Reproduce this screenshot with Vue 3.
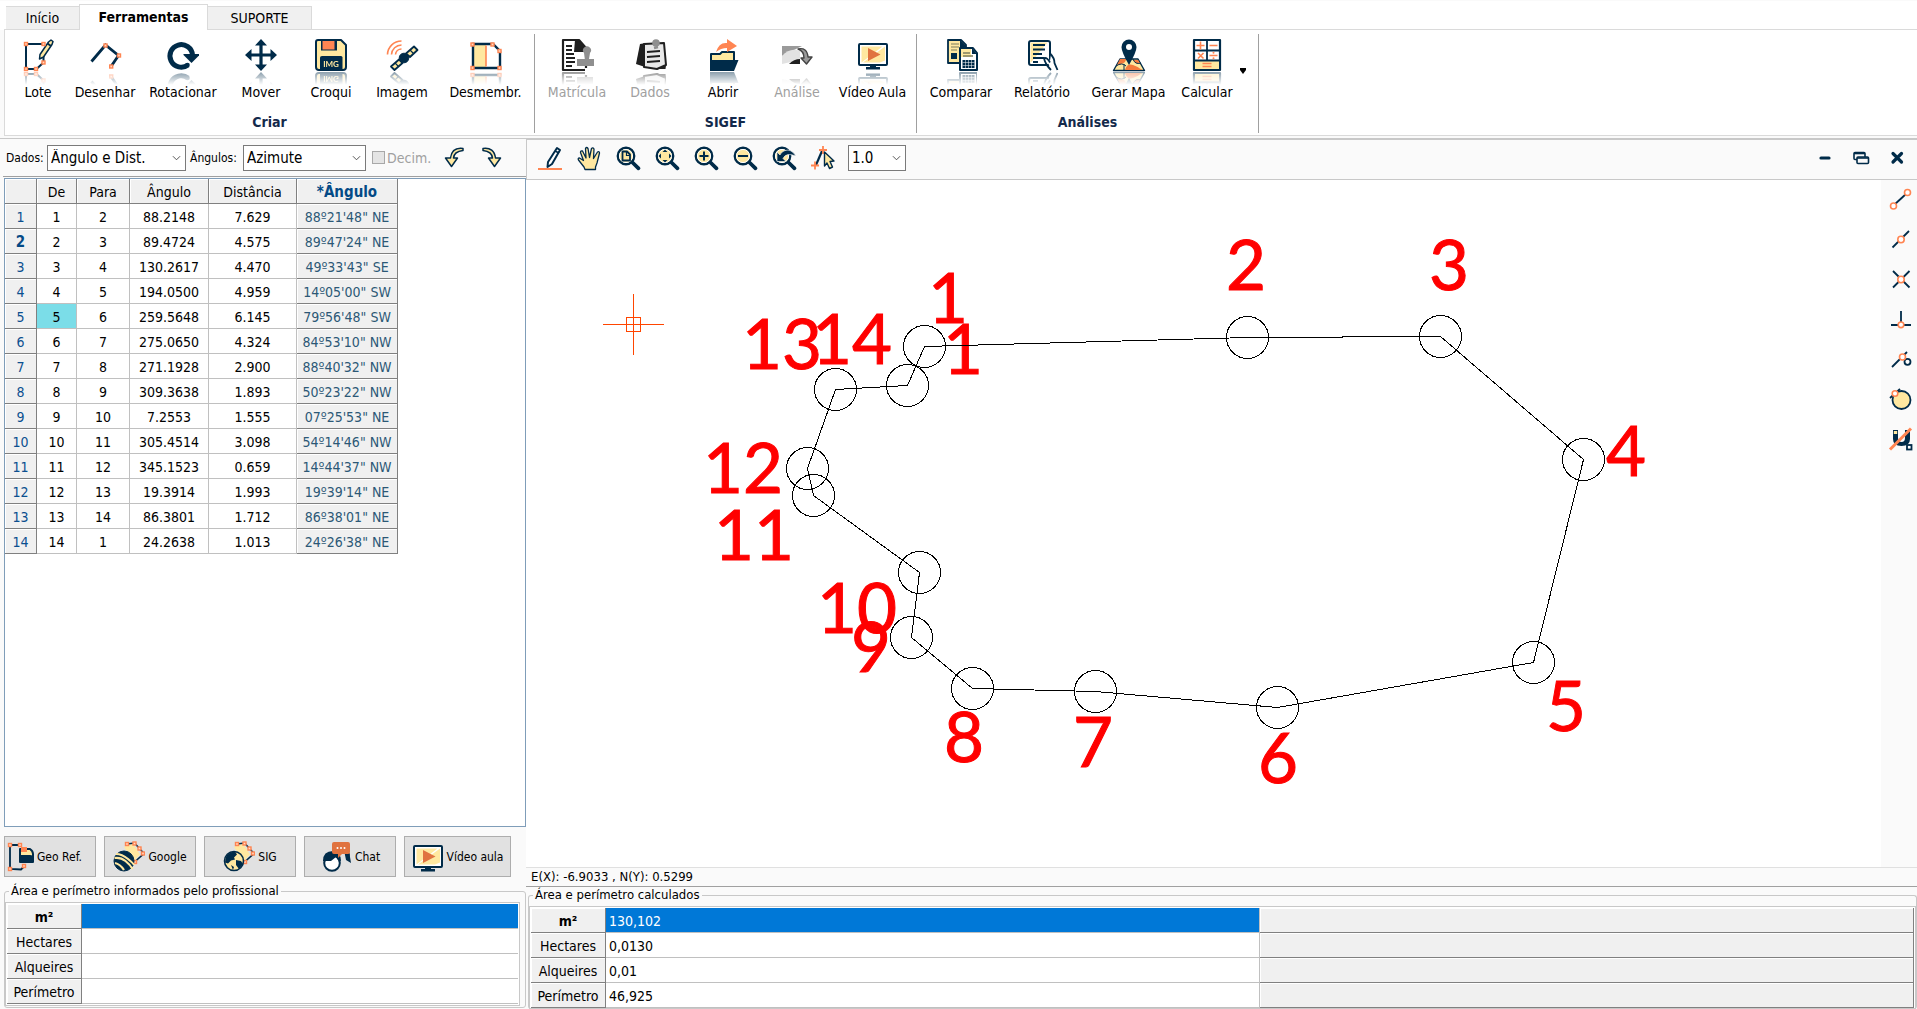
<script setup>
import { ref } from 'vue'

const N = '#002b49'
const O = '#ff8552'
const Y = '#ffe8a0'

const node = (x, y) => `<rect x="${x - 1.5}" y="${y - 1.5}" width="3" height="3" fill="#ffd9c4" stroke="${O}" stroke-width="1.4"/>`
const line = (d, color = N, width = 2) => `<path d="${d}" fill="none" stroke="${color}" stroke-width="${width}"/>`
const shape = (d, fill = N, stroke = 'none', width = 1.5) => `<path d="${d}" fill="${fill}" stroke="${stroke}" stroke-width="${width}" stroke-linejoin="round"/>`
const dot = (x, y, r, fill = '#fff', stroke = O, width = 1.6) => `<circle cx="${x}" cy="${y}" r="${r}" fill="${fill}" stroke="${stroke}" stroke-width="${width}"/>`

const lens = inner => dot(10, 10, 8.2, Y, N, 2.4) + dot(10, 10, 6.6, 'none', '#fff', 1)
  + `<path d="M16.5 16.5l6 5.8" stroke="${N}" stroke-width="3.8" stroke-linecap="round"/>` + inner
const monitor = shape('M3 5h26q1 0 1 1v19q0 1-1 1H3q-1 0-1-1V6q0-1 1-1z', '#fff', N, 2) + shape('M4.5 7.5h21l-21 16z', Y) + shape('M28 7.5v14l-5 2H6z', Y)
  + shape('M11 9l12.500 6.500L11 22z', '#e07340') + shape('M13 26h6v2h4v2.500H9V28h4z')
const parcel = shape('M11 6l9-3.500 7 11-6.500 7z', Y) + line('M14 3l7.500-1L31 12.500 21.500 21', N, 1.6) + node(14, 3) + node(21.5, 2.5) + node(26.5, 7.5) + node(30, 12.5) + node(22, 21)

const icons = {
  lot: line('M22 5H4v25h10.500l7-6.500V17') + shape('M26.500 3l2.500-2 2 1.500-1 3-8.500 12.500-4 2 .5-4.500z', Y, N, 1.5) + line('M25.500 4.500l3.500 2.500') + node(4, 5) + node(21.5, 5) + node(4, 30) + node(14, 30) + node(21.500, 23.5),
  draw: line('M2.500 22.500L16.500 6l13 10.500-7.500 11', N, 2.8) + node(16.5, 6.5) + node(30, 16.5) + node(22.200, 27.5),
  rotate: line('M21 26a11.300 11.300 0 1 1 4.500-10', N, 5) + shape('M16.500 15H32v1.500l-7.500 7.500-8-8z') + dot(20.5, 26, 2.300, N, 'none'),
  move: line('M16 5v22M5 16h22', N, 3.2) + shape('M16 0l6 6.500H10zM16 32l6-6.500H10zM0 16l6.500-6v12zM32 16l-6.500-6v12z'),
  sketch: shape('M3 1h23l5 5v22q0 3-3 3H4q-3 0-3-3V3q0-2 2-2z', Y, N, 2) + shape('M6 1h16v10.500H6z') + shape('M7.500 2h12v8.500h-12z', O) + shape('M7 17h19q1.500 0 1.500 1.500V31H5V18.500Q5 17 7 17z') + `<text x="16" y="28" fill="${Y}" font-size="8" font-weight="700" text-anchor="middle" font-family="Lato, sans-serif">IMG</text>`,
  image: line('M1.500 15.500A14 14 0 0 1 15.500 2M5.500 15.500A10 10 0 0 1 15.500 6M9.500 15.500A6 6 0 0 1 15.500 10', O, 1.6) + shape('M20 14.500l8-7 3.500 3.500-7.500 7zM5 27.500l8-7 3.500 3.500-8 7z', Y, N, 1.8) + dot(18, 19, 4.800, N, N, 1) + line('M24 11l3.500 3.500M9 24l3.500 3.5', N, 1.2),
  split: shape('M3 6h13v22H3z', Y) + line('M3 5h20l7 7v17H3z', N, 2.4) + line('M16 6.500v21', O, 1.6) + node(2.5, 5.5) + node(22.500, 5.5) + node(29.5, 12) + node(29.5, 29) + node(2.500, 29),
  deed: shape('M2 1h16l7 8v22H2z', '#fff', '#1f1f1f', 2.2) + shape('M14 1h4l7 8v4H13z', '#1f1f1f') + line('M5 7h6M5 11h6M5 15h8M5 19h9M5 23h9M5 27h6', '#1f1f1f', 2) + shape('M20 20h4l-1-6a4 4 0 1 1 6 0l-1 6h5v7H16v-7z', '#8f8f8f') + shape('M24 29h6v3h-6z', '#fff'),
  data: shape('M6 5l6-1-1 24-9-3z', '#1f1f1f') + shape('M10 5l20-1 2 22-9 4-13-2z', '#e8e8e8', '#1f1f1f', 2) + shape('M22 30l10-4-.500 4z', '#1f1f1f') + line('M13 13l13-1M13 18l13-1M13 23l13-1', '#1f1f1f', 1.8) + dot(22, 4, 3.800, '#8f8f8f', 'none') + line('M20 9l4-1', '#8f8f8f', 2.5),
  open: shape('M4 15h9l2-2h12v9H4z', Y, N, 2) + shape('M6 21h25.500L27 32H3V21z') + shape('M9 13Q12 3 20 4V0l10 7-10 6V9q-6 0-11 4z', O),
  analysis: shape('M1 7h20L1 17z', '#9a9a9a') + shape('M1 17Q9 8 19 12v9L1 25z', '#e2e2e2') + shape('M8 25q5-5 11-5v5z', '#1f1f1f') + shape('M17 10q9-2 10 8h4l-5.500 7-5.500-6h3q0-7-6-9z', '#9a9a9a', '#444', 1.4),
  monitor,
  compare: shape('M3 1h13l5 5v18H3z', Y, N, 1.8) + shape('M15 1l6 6v3h-6z') + line('M6 5h8M6 8h8M6 11h6', '#7d7c5d', 1.2) + shape('M6 14h6v6H6z') + shape('M15 9h13l4 5v17H15z', '#fff', N, 2) + shape('M16 10h10v8H16z', Y) + shape('M27 9l5 6h-5z') + line('M18 14h7M18 17h10', '#7d7c5d', 1.4) + shape('M17.500 21h12v8h-12z') + line('M17.500 23.500h12M17.500 26.500h12M20.500 21v8M23.500 21v8M26.500 21v8', '#fff', .5),
  report: shape('M5 2h17q2 0 2 2v20q0 2-2 2H5q-2 0-2-2V4q0-2 2-2z', '#fff', N, 2) + shape('M4.500 3.500h17L4.500 24z', Y) + line('M7 6h12M7 10.500h12M7 15h9M7 19h11M7 23h5', N, 1.8) + shape('M24 22q-3-5-5-4l7 14h6l-4-9q0-6-3-8z', '#fff') + line('M25 31q-6-6-7-12 3-1 6 4.500M24.500 15q4 4 4 9l3 7', N, 1.8),
  map: shape('M7 20h18l6.500 11.500H.5z', Y, N, 1.4) + shape('M7 20h6q0 4-5 5l-4 1zM12 31q2-7 8-5t9 5zM20 21h5l2 3q-4 2-7-3z', '#f47a3c') + line('M11 25v7M3 27q6-4 10 0M20 20q2 6 8 4', N, 1) + shape('M16 26Q8.500 13 8.500 8a7.500 7.500 0 0 1 15 0q0 5-7.500 18z') + dot(16, 8, 3, '#fff', 'none'),
  calc: shape('M3 1h26v30H3z', '#fff', N, 2.2) + shape('M4 22h24v8H4z', Y) + line('M16 1v20.500M3 11.500h26M3 21.500h26', N, 1.8) + line('M5.500 6.500h8M9.500 2.500v8M18.500 6.500h8M7 14l5.500 5.500M12.500 14L7 19.500M18.500 16.500h8M11.500 24.500h9M11.500 27.500h9', O, 1.6) + dot(22.500, 13.800, 1, O, 'none') + dot(22.500, 19.300, 1, O, 'none'),

  pencil: shape('M19 2l3 2-8 14-4.500 3 .5-5z', '#fff', N, 2) + line('M17 5l4 2', N, 1.6) + line('M0 23h24', O, 2),
  hand: shape('M7 21L1.500 14q-1-2 1-2l4 2.500-3-8q0-2 2-1.500l3.500 7-.5-9.500q1-2 2.500 0l1.500 9 2-9q1.500-1.500 2.500.500l-.500 9.500 4-6.500q2-1 2 1L20 17l-1.500 4v2.500H8z', Y, N, 1.3),
  zoomPage: lens(shape('M6.500 5.500h4.500l3 3v6H6.500z', Y, N, 1.8) + line('M10.500 6v3.500h3.5', N, 1.2)),
  zoomFit: lens(shape('M10 3.500l2.500 2.500h-5zM10 16.500l2.500-2.500h-5zM3.500 10L6 7.500v5zM16.500 10L14 7.500v5z')),
  zoomIn: lens(line('M5.500 10h9M10 5.500v9', N, 2)),
  zoomOut: lens(line('M5 10h10', N, 2)),
  zoomBack: lens(shape('M5 6v9.500h9l-3-3Q14 6 24 10 19 2.500 13 4.500 9 6 8 9z', N, '#fff', .6)),
  pick: line('M5 19l6-14', N, 2.2) + line('M8 4h8M12 0v8M0 19.500h8M4 15.500v8', O, 1.8) + shape('M13.500 6l9.500 9-4 .5 2.500 5.500-3 1.500-2.500-5.500-2.500 3z', Y, N, 1.4),
  undo: shape('M20 1.500Q9 0 7.500 11H2.500l6 8.500 6-8.500h-4Q11 4.500 20 3.500z', Y, N, 1.5),
  redo: shape('M1 1.500Q12 0 13.500 11h5l-6 8.500-6-8.500h4Q10 4.500 1 3.500z', Y, N, 1.5),

  snapEnd: line('M5 17L17 6', N, 1.8) + dot(4.5, 18, 3) + dot(18.5, 4.5, 3),
  snapMid: line('M3.500 19.500L20 3', N, 1.8) + dot(12, 11.5, 3.2),
  snapCross: line('M4 3l16.500 16.500M4 19.500L20.500 3', N, 1.8) + dot(12, 11.5, 3.2),
  snapPerp: line('M12 3v14M2 17h20', N, 1.8) + dot(12, 16.8, 2.8),
  snapTangent: line('M3 19L18 4', N, 1.8) + dot(18.5, 13.8, 3, '#fff', N, 1.8) + dot(13.5, 9, 3),
  snapCircle: dot(12.5, 12, 9, Y, N, 1.800) + line('M1 10L11 1', N, 1.8) + dot(6, 5.5, 2.8),
  magnet: shape('M4 2h5v8q0 4 3.500 4t3.500-4V2h5v9q0 7-8.500 7T4 11z') + shape('M4.800 3h3.400v3H4.800z', Y) + line('M1 21.500L22 0.5', O, 3) + `<rect x="18" y="17" width="4.500" height="4.500" fill="#fff" stroke="${N}" stroke-width="1.8"/>`,

  georef: line('M17 4H5v24l11 .5 4-4', N, 1.8) + shape('M15 8h10q3 2 3 5v8H15z', Y, N, 2) + shape('M16 6h6v5h-6z', O) + shape('M16 14h9q3 0 3 2v6H16z') + node(5, 4) + node(15, 4) + node(5, 28) + node(19, 25),
  google: parcel + dot(11, 20, 10, N, N, 1) + line('M1.500 17q6-1 11 3t7 8M3 13q6 0 12 5t6 6M2 22q5 1 9 7', Y, 2.2),
  globe: parcel + dot(11, 20, 9.500, Y, N, 1.6) + shape('M4 14q4-4 8-3.500l2 3-3 3 1 2-4 1-3 3-3-1q0-5 2-7.500zM13 19l5 1 2 3-4 5-3-4zM8 24l3 2-1 3z'),
  chat: shape('M24 9q7 1 6 7l1 6-5-3z') + dot(12, 22, 7.800, '#fff', N, 2) + shape('M3 20Q3 10 13 10q8 1 8 10l-3-1-2-3-5 4H5z') + shape('M14 1h14q2 0 2 2v8q0 2-2 2h-6l-4 4v-4h-4q-2 0-2-2V3q0-2 2-2z', '#e07340') + dot(17.500, 7, 1, '#fff', 'none') + dot(21, 7, 1, '#fff', 'none') + dot(24.500, 7, 1, '#fff', 'none'),
}

const groups = [
  { id: 'create', title: 'Criar', tools: [['lot', 'Lote'], ['draw', 'Desenhar'], ['rotate', 'Rotacionar'], ['move', 'Mover'], ['sketch', 'Croqui'], ['image', 'Imagem'], ['split', 'Desmembr.']] },
  { id: 'sigef', title: 'SIGEF', tools: [['deed', 'Matrícula', true], ['data', 'Dados', true], ['open', 'Abrir'], ['analysis', 'Análise', true], ['monitor', 'Vídeo Aula']] },
  { id: 'reports', title: 'Análises', tools: [['compare', 'Comparar'], ['report', 'Relatório'], ['map', 'Gerar Mapa'], ['calc', 'Calcular']] },
]
const viewTools = ['pencil', 'hand', 'zoomPage', 'zoomFit', 'zoomIn', 'zoomOut', 'zoomBack', 'pick']
const snapTools = ['snapEnd', 'snapMid', 'snapCross', 'snapPerp', 'snapTangent', 'snapCircle', 'magnet']
const actions = [['georef', 'Geo Ref.'], ['google', 'Google'], ['globe', 'SIG'], ['chat', 'Chat'], ['monitor', 'Vídeo aula']]

const rows = [
  [1, 2, '88.2148', '7.629', '88º21\'48" NE'],
  [2, 3, '89.4724', '4.575', '89º47\'24" NE'],
  [3, 4, '130.2617', '4.470', '49º33\'43" SE'],
  [4, 5, '194.0500', '4.959', '14º05\'00" SW'],
  [5, 6, '259.5648', '6.145', '79º56\'48" SW'],
  [6, 7, '275.0650', '4.324', '84º53\'10" NW'],
  [7, 8, '271.1928', '2.900', '88º40\'32" NW'],
  [8, 9, '309.3638', '1.893', '50º23\'22" NW'],
  [9, 10, '7.2553', '1.555', '07º25\'53" NE'],
  [10, 11, '305.4514', '3.098', '54º14\'46" NW'],
  [11, 12, '345.1523', '0.659', '14º44\'37" NW'],
  [12, 13, '19.3914', '1.993', '19º39\'14" NE'],
  [13, 14, '86.3801', '1.712', '86º38\'01" NE'],
  [14, 1, '24.2638', '1.013', '24º26\'38" NE'],
]
const current = ref(2)
const marked = ref(5)

const informed = [['m²', ''], ['Hectares', ''], ['Alqueires', ''], ['Perímetro', '']]
const computedArea = [['m²', '130,102'], ['Hectares', '0,0130'], ['Alqueires', '0,01'], ['Perímetro', '46,925']]

const vertices = [
  [398, 166], [721, 157], [914, 156], [1057, 279], [1007, 482], [751, 527], [569, 511],
  [446, 508], [385, 457], [393, 392], [287, 315], [281, 288], [309, 209], [381, 205],
]
const outline = vertices.map(v => v.join(',')).join(' ')
const labels = [
  ['1', 402, 143], ['1', 417, 194], ['2', 700, 110], ['3', 903, 110], ['4', 1080, 296],
  ['5', 1020, 551], ['6', 732, 603], ['7', 547, 587], ['8', 418, 582], ['9', 325, 492],
  ['10', 291, 453], ['11', 188, 380], ['12', 177, 313], ['13', 216, 189], ['14', 286, 184],
]
</script>

<template>
  <div class="app">
    <nav class="tabs">
      <button class="tab start">Início</button>
      <button class="tab active">Ferramentas</button>
      <button class="tab support">SUPORTE</button>
    </nav>

    <header class="ribbon">
      <section v-for="g in groups" :key="g.id" class="group">
        <div class="tools" :class="g.id">
          <button v-for="[icon, name, off] in g.tools" :key="icon" class="tool" :disabled="off">
            <svg class="big" viewBox="0 0 32 32" v-html="icons[icon]"></svg>
            <span>{{ name }}</span>
          </button>
          <button v-if="g.id === 'reports'" class="more" aria-label="Mais opções">
            <svg viewBox="0 0 6 6"><path d="M0 0h6v2L3 6 0 2z" /></svg>
          </button>
        </div>
        <h2>{{ g.title }}</h2>
      </section>
    </header>

    <main class="work">
      <aside class="left">
        <div class="bar">
          <label for="kind">Dados:</label>
          <select id="kind" class="kind"><option>Ângulo e Dist.</option></select>
          <label for="angles" class="second">Ângulos:</label>
          <select id="angles" class="angles"><option>Azimute</option></select>
          <label class="decim"><input type="checkbox" disabled />Decim.</label>
          <button class="flat undo" aria-label="Desfazer"><svg viewBox="0 0 21 21" v-html="icons.undo"></svg></button>
          <button class="flat" aria-label="Refazer"><svg viewBox="0 0 21 21" v-html="icons.redo"></svg></button>
        </div>

        <div class="sheet">
          <table class="points">
            <colgroup><col class="c-n" /><col class="c-from" /><col class="c-to" /><col class="c-ang" /><col class="c-dist" /><col class="c-brg" /></colgroup>
            <thead>
              <tr><th></th><th>De</th><th>Para</th><th>Ângulo</th><th>Distância</th><th class="brg">*Ângulo</th></tr>
            </thead>
            <tbody>
              <tr v-for="r in rows" :key="r[0]">
                <th :class="{ now: r[0] === current }">{{ r[0] }}</th>
                <td :class="{ marked: r[0] === marked }">{{ r[0] }}</td>
                <td>{{ r[1] }}</td>
                <td>{{ r[2] }}</td>
                <td>{{ r[3] }}</td>
                <td class="bearing">{{ r[4] }}</td>
              </tr>
            </tbody>
          </table>
        </div>

        <div class="actions">
          <button v-for="[icon, name] in actions" :key="name" :class="icon">
            <svg viewBox="0 0 32 32" v-html="icons[icon]"></svg>{{ name }}
          </button>
        </div>

        <fieldset class="informed">
          <legend>Área e perímetro informados pelo profissional</legend>
          <div class="frame">
            <table class="areas">
              <tr v-for="([name, value], i) in informed" :key="name" :class="{ first: i === 0 }">
                <th scope="row">{{ name }}</th><td>{{ value }}</td>
              </tr>
            </table>
          </div>
        </fieldset>
      </aside>

      <section class="right">
        <div class="viewbar">
          <button v-for="t in viewTools" :key="t" class="flat view" :aria-label="t"><svg viewBox="0 0 24 24" v-html="icons[t]"></svg></button>
          <select class="scale" aria-label="Escala"><option>1.0</option></select>
          <div class="window">
            <button class="flat" aria-label="Minimizar"><svg viewBox="0 0 18 18"><path d="M5 9h8" stroke="#002b49" stroke-width="3.200" stroke-linecap="round" /></svg></button>
            <button class="flat" aria-label="Restaurar"><svg viewBox="0 0 18 18" fill="#fafafa" stroke="#002b49" stroke-width="1.600"><rect x="2" y="3.500" width="11" height="7" rx="1" /><path d="M2 4.500h11" /><rect x="5" y="8" width="11.500" height="6.500" rx="1" /><path d="M5 9h11.500" /></svg></button>
            <button class="flat" aria-label="Fechar"><svg viewBox="0 0 18 18"><path d="M5 4.500l8.500 8.500M13.500 4.500L5 13" stroke="#002b49" stroke-width="3.200" stroke-linecap="round" /></svg></button>
          </div>
        </div>

        <div class="stage">
          <svg class="drawing" role="img" aria-label="Polígono do lote">
            <g class="labels"><text v-for="([t, x, y], i) in labels" :key="i" :x="x" :y="y">{{ t }}</text></g>
            <g class="lines" transform="translate(0.5 0.5)">
              <polygon :points="outline" />
              <circle v-for="([x, y], i) in vertices" :key="i" :cx="x" :cy="y" r="21" />
            </g>
            <g class="cursor"><path d="M77 144.500h61M107.500 114v61" /><rect x="100.500" y="137.500" width="14" height="14" /></g>
          </svg>
          <div class="snaps">
            <button v-for="t in snapTools" :key="t" class="flat" :aria-label="t"><svg viewBox="0 0 24 24" v-html="icons[t]"></svg></button>
          </div>
        </div>

        <div class="status">E(X): -6.9033 , N(Y): 0.5299</div>

        <fieldset class="calculated">
          <legend>Área e perímetro calculados</legend>
          <div class="frame">
            <table class="areas">
              <tr v-for="([name, value], i) in computedArea" :key="name" :class="{ first: i === 0 }">
                <th scope="row">{{ name }}</th><td>{{ value }}</td><td class="blank"></td>
              </tr>
            </table>
          </div>
        </fieldset>
      </section>
    </main>
  </div>
</template>

<style>
body { margin: 0; background: #fafafa; }
</style>

<style scoped>
* { box-sizing: border-box; }
.app {
  display: flex; flex-direction: column; height: 100vh; overflow: hidden;
  background: #fafafa; color: #000;
  font: 14px/18px "DejaVu Sans Condensed", "DejaVu Sans", sans-serif;
}
button { font: inherit; color: inherit; padding: 0; margin: 0; border: 0; background: none; }
svg { display: block; }

.tabs { display: flex; align-items: flex-end; height: 30px; padding-left: 6px; background: #fff; border-top: 1px solid #fafafa; flex: none; }
.tab { height: 24px; border: 1px solid #dadada; border-width: 1px 0; background: #f0f0f0; }
.start { width: 73px; }
.support { width: 104px; border-right-width: 1px; }
.tab.active { width: 129px; height: 26px; padding-bottom: 2px; background: #fff; border-width: 1px 1px 0; font-size: 14px; font-weight: 700; position: relative; z-index: 1; }

.ribbon { display: flex; height: 107px; flex: none; margin-top: -1px; margin-left: 4px; padding-top: 4px; background: #fff; border: 1px solid #dadada; border-right: 0; }
.group { height: 99px; border-right: 1px solid #a0a0a0; }
.tools { display: grid; height: 74px; padding-top: 5px; }
.create { grid-template-columns: 66px 68px 88px 68px 72px 70px 97px; }
.sigef { grid-template-columns: 84px 62px 84px 64px 87px; }
.reports { grid-template-columns: 88px 74px 99px 58px 22px; }
.tool { display: flex; flex-direction: column; align-items: center; align-self: start; gap: 12px; white-space: nowrap; }
.tool:disabled { color: #a0a0a0; }
.big { width: 32px; height: 32px; flex: none; overflow: visible; -webkit-box-reflect: below 1px linear-gradient(transparent 60%, rgba(0, 0, 0, .45)); }
.more { align-self: start; margin-top: 29px; padding-left: 4px; }
.more svg { width: 6px; height: 6px; }
h2 { margin: 0; padding-top: 5px; text-align: center; font-size: 14px; line-height: 18px; color: #13294b; }

.work { display: flex; flex: 1; min-height: 0; margin-top: 2px; border-top: 1px solid #c8c8c8; }
.left { width: 526px; flex: none; display: flex; flex-direction: column; padding-left: 4px; }
.bar { display: flex; align-items: center; height: 38px; margin-left: -1px; border-bottom: 1px solid #a0a0a0; padding-left: 3px; font-size: 13px; flex: none; }
.bar label { flex: none; width: 41px; font-size: 12px; white-space: nowrap; }
.bar label.second { width: 53px; }
select {
  appearance: none; height: 26px; padding: 0 20px 0 3px; border: 1px solid #7a7a7a; border-radius: 0; color: #000;
  font: 15px/18px "DejaVu Sans Condensed", "DejaVu Sans", sans-serif;
  background: #fff url("data:image/svg+xml,%3Csvg xmlns='http://www.w3.org/2000/svg' viewBox='0 0 10 6'%3E%3Cpath d='M1 1l4 4 4-4' fill='none' stroke='%23444'/%3E%3C/svg%3E") no-repeat right 4px center / 9px 6px;
}
.kind { width: 139px; margin-right: 4px; }
.angles { width: 123px; }
.bar label.decim { display: flex; align-items: center; gap: 2px; width: 71px; margin-left: 6px; color: #a0a0a0; font-size: 14px; }
.decim input { appearance: none; width: 13px; height: 13px; margin: 0; border: 1px solid #a8a8a8; background: #e4e4e4; }
.flat svg { width: 24px; height: 24px; overflow: visible; }
.bar .flat svg { width: 21px; height: 21px; }
.undo { margin-right: 18px; }

.sheet { flex: 1; min-height: 0; margin-top: 1px; border: 1px solid #7f9db9; background: #fff; }
table { border-collapse: separate; border-spacing: 0; table-layout: fixed; }
th, td { height: 25px; padding: 2px 0 0; text-align: center; font-weight: 400; border: 1px solid #c0c0c0; border-width: 0 1px 1px 0; background: #fff; white-space: nowrap; }
th, .bearing, .blank { background: #f0f0f0; border-color: #808080; box-shadow: inset 1px 1px #fff; }
.points { width: 393px; }
.c-n { width: 32px; } .c-from { width: 40px; } .c-to { width: 53px; } .c-ang { width: 79px; } .c-dist { width: 88px; } .c-brg { width: 101px; }
.points tbody th { color: #0b4f8f; }
.points tbody th.now, .points .brg { font-size: 15px; font-weight: 700; color: #044a86; }
.bearing { color: #2c5876; }
.marked { background: #7bdde8; }

.actions { display: flex; gap: 8px; margin: 9px 0 6px; flex: none; }
.actions button { display: flex; align-items: center; justify-content: center; gap: 3px; width: 92px; height: 41px; border: 1px solid #adadad; background: #e1e1e1; font-size: 12px; white-space: nowrap; }
.actions .monitor { width: 107px; }
.actions svg { width: 32px; height: 32px; flex: none; }
.actions .georef { gap: 0; justify-content: flex-start; }

fieldset { margin: 0; border: 1px solid #c8c8c8; border-radius: 3px; min-width: 0; padding: 3px 0 0; }
legend { margin-left: 4px; padding: 0 2px; font-size: 13px; line-height: 16px; }
.informed { height: 125px; margin-bottom: 1px; }
.informed .frame { margin-right: 5px; }
.frame { border: 1px solid #c8c8c8; padding: 1px; background: #fff; overflow: hidden; }
.areas { width: 100%; }
.areas th { width: 75px; }
.areas td { text-align: left; padding-left: 3px; }
.informed .areas td { border-right: 0; }
.areas .first th { font-weight: 700; }
.areas .first td:nth-child(2) { background: #0078d7; color: #fff; }

.right { flex: 1; min-width: 0; display: flex; flex-direction: column; }
.viewbar { display: flex; align-items: center; height: 41px; flex: none; border: 1px solid #c8c8c8; border-right: 0; padding: 0 11px 3px; }
.view { margin-right: 15px; }
.scale { width: 58px; margin-left: -2px; }
.window { display: flex; gap: 18px; margin-left: auto; }
.window svg { width: 18px; height: 18px; }

.stage { flex: 1; min-height: 0; display: flex; background: #fff; }
.drawing { flex: 1; min-width: 0; height: 100%; }
.labels { fill: #f00; stroke: #f00; stroke-width: 1; font: 69px Lato, sans-serif; }
.lines { fill: none; stroke: #000; stroke-width: 1; shape-rendering: crispEdges; }
.cursor { fill: none; stroke: #ff4500; }
.snaps { width: 36px; flex: none; display: flex; flex-direction: column; align-items: center; gap: 16px; padding-top: 8px; padding-left: 4px; background: #fafafa; }
.status { height: 20px; flex: none; padding-left: 5px; border-top: 1px solid #e0e0e0; border-bottom: 1px solid #a0a0a0; font-size: 13px; line-height: 18px; }
.calculated { margin-left: 2px; height: 122px; flex: none; border-bottom: 0; }
.calculated .frame { height: 103px; }
</style>
